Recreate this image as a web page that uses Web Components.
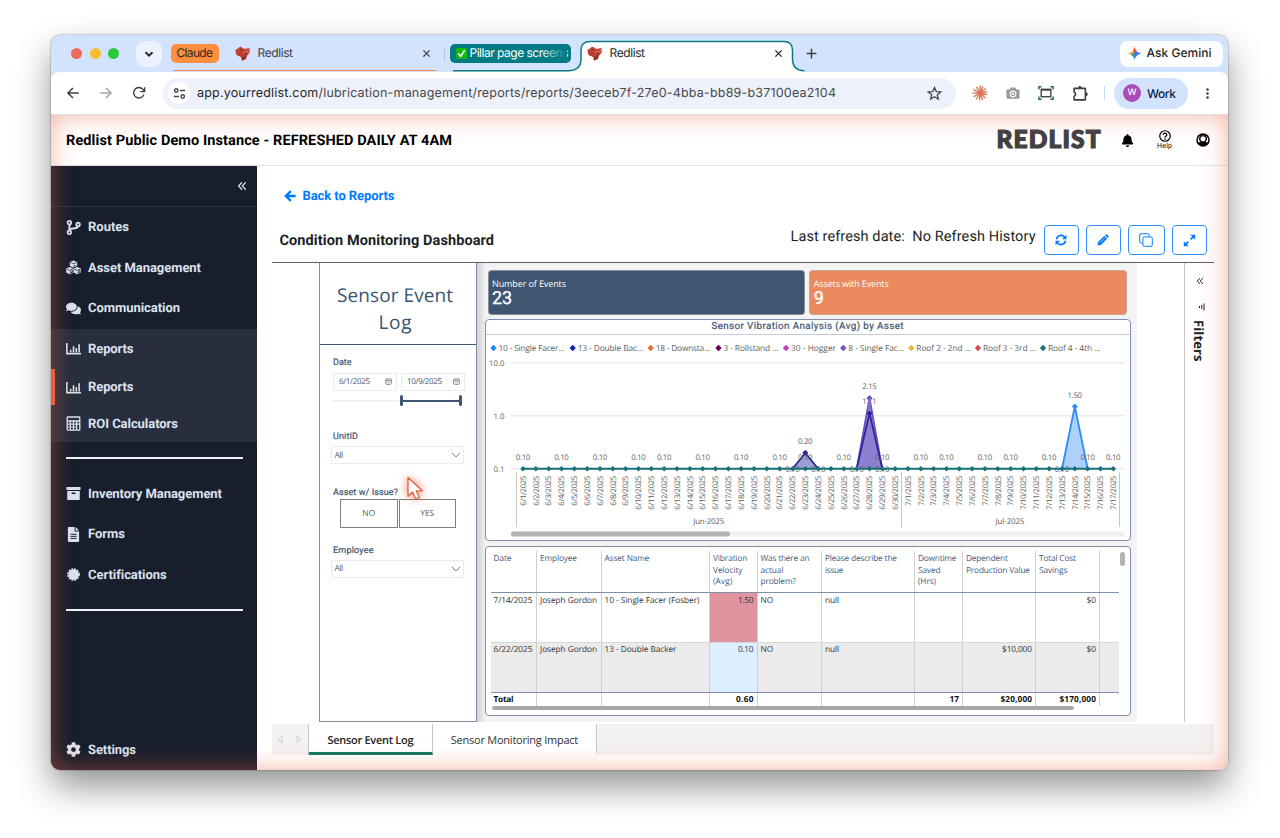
<!DOCTYPE html>
<html lang="en">
<head>
<meta charset="utf-8">
<title>Redlist</title>
<style>
  body {
    margin: 0;
    width: 1280px;
    height: 838px;
    overflow: hidden;
    background: #fff;
    font-family: Roboto, sans-serif;
    text-rendering: geometricPrecision;
    --font-ui: Inter, sans-serif;
    --font-report: "Open Sans", "Noto Sans", sans-serif;
    --navy: #3f5571;
    --blue: #007bff;
    --teal: #007b83;
  }
</style>
</head>
<body>
<browser-window>
  <tab-strip slot="tabs"></tab-strip>
  <address-bar slot="toolbar"></address-bar>
  <app-header></app-header>
  <app-layout>
    <side-nav slot="nav">
      <nav-item icon="branch">Routes</nav-item>
      <nav-item icon="cubes">Asset Management</nav-item>
      <nav-item icon="comments">Communication</nav-item>
      <nav-item slot="group" icon="chart">Reports</nav-item>
      <nav-item slot="group" icon="chart" active>Reports</nav-item>
      <nav-item slot="group" icon="calculator" class="last">ROI Calculators</nav-item>
      <nav-item slot="tools" icon="archive">Inventory Management</nav-item>
      <nav-item slot="tools" icon="file">Forms</nav-item>
      <nav-item slot="tools" icon="certificate">Certifications</nav-item>
      <nav-item slot="bottom" icon="cog">Settings</nav-item>
    </side-nav>
    <report-page>
      <slicer-panel slot="slicers"></slicer-panel>
      <kpi-card slot="kpi" value="23" measure="20"><fit-text width="74">Number of Events</fit-text></kpi-card>
      <kpi-card slot="kpi" value="9" measure="9" style="--card: #eb895f"><fit-text width="75">Assets with Events</fit-text></kpi-card>
      <vibration-chart></vibration-chart>
      <event-table></event-table>
      <filter-pane slot="filters"></filter-pane>
      <sheet-tabs slot="sheets"></sheet-tabs>
    </report-page>
  </app-layout>
</browser-window>

<script>
const ICONS = {
  down: ["0 0 16 16", `<path d="M4 6l4 4 4-4" fill="none" stroke="currentColor" stroke-width="2.1"/>`],
  close: ["0 0 16 16", `<path d="M2.5 2.5l11 11M13.5 2.5l-11 11" stroke="currentColor" stroke-width="2.3"/>`],
  plus: ["0 0 16 16", `<path d="M8 2v12M2 8h12" stroke="currentColor" stroke-width="1.8"/>`],
  back: ["0 0 16 16", `<path d="M14.5 8H2.5M8 2.2L2.2 8 8 13.8" fill="none" stroke="currentColor" stroke-width="1.7"/>`],
  forward: ["0 0 16 16", `<path d="M1.5 8h12M8 2.2L13.8 8 8 13.8" fill="none" stroke="currentColor" stroke-width="1.7"/>`],
  reload: ["0 0 16 16", `<path d="M13.6 9.6A6 6 0 1 1 12.4 3.8L14 5.6" fill="none" stroke="currentColor" stroke-width="1.6"/><path d="M14.5 1.4v5H9.5" fill="none" stroke="currentColor" stroke-width="1.5"/>`],
  tune: ["0 0 16 16", `<g fill="none" stroke="currentColor" stroke-width="1.7"><circle cx="4" cy="4.3" r="2.1"/><path d="M8.5 4.3H15M1 11.7h6.5"/><circle cx="12" cy="11.7" r="2.1"/></g>`],
  star: ["0 0 16 16", `<path d="M8 1.6l1.9 4.3 4.7.4-3.6 3.1 1.1 4.6L8 11.5 3.900 14 5 9.400 1.400 6.300l4.700-.400z" fill="none" stroke="currentColor" stroke-width="1.400"/>`],
  burst: ["0 0 16 16", `<path d="M8 8L8.2.6M8 8l3-6.6M8 8l5.6-4.6M8 8l7.3-1.4M8 8l7.2 1.6M8 8l5.4 5M8 8l2.6 6.9M8 8l-.4 7.4M8 8l-3.7 6.3M8 8l-6.4 3.8M8 8l-7.4.2M8 8L1.500 4.600M8 8L4.400 1.800" stroke="#d97757" stroke-width="1.350"/>`],
  camera: ["0 0 16 16", `<path fill="#9a9a9a" d="M1.500 4H4l1.400-2.400h5.200L12 4h2.500q1 0 1 1v8.500q0 1-1 1h-13q-1 0-1-1V5q0-1 1-1z"/><circle cx="8" cy="9" r="3.200" fill="none" stroke="#fff" stroke-width="1.300"/><circle cx="8" cy="9" r="1.300" fill="#fff"/>`],
  capture: ["0 0 18 16", `<g fill="none"><path d="M1 4V1h3M14 1h3v3M17 12v3h-3M4 15H1v-3" stroke="#1c6b56" stroke-width="1.600"/><rect x="3.600" y="3.800" width="10.800" height="8.400" stroke="#3c4043" stroke-width="1.500"/><path d="M3.600 4.600h10.800" stroke="#3c4043" stroke-width="1.600"/></g>`],
  puzzle: ["0 0 16 16", `<path d="M2 3.200h10.600v10.800H2v-3.500a2 2 0 0 0 0-3.800z" fill="none" stroke="currentColor" stroke-width="1.500" stroke-linejoin="round"/><path d="M5.600 2.800a1.800 1.800 0 0 1 3.600 0zM13 6.900a1.800 1.800 0 0 1 0 3.600z" fill="currentColor"/>`],
  dots: ["0 0 16 16", `<g fill="currentColor"><circle cx="8" cy="3" r="1.600"/><circle cx="8" cy="8" r="1.600"/><circle cx="8" cy="13" r="1.600"/></g>`],
  redlist: ["0 0 16 16", `<path d="M.3 4.600L5.800.7l4 2.400 5.400-1.100.5 5-3 3.600-.9 3.300-4.400 1.900-.4-3.700L1.600 9.500z" fill="#b83e2f"/><path d="M.3 4.600L5.800.7l4 2.400-4.500 3.200z" fill="#cc4a38"/><path d="M7.300 6.500l8.200-3.800-.4 4.200-4.800 3.200z" fill="#da5a46"/><path d="M4.200 4.200l2-1.400 1 .6-1.800 1.500z" fill="#5e1c14"/><path d="M9.700 8.300l2.800-1.600v1.500l-2 1.300z" fill="#6a2117"/><path d="M7 12.300l4.800-2.300-.9 3.600L7.400 15.500z" fill="#8f2c20"/>`],
  check: ["0 0 12 12", `<rect width="12" height="12" rx="1.500" fill="#10ba10"/><path d="M2.500 6l2.600 3L9.500 2.500" fill="none" stroke="#fff" stroke-width="1.700"/>`],
  gemini: ["0 0 16 16", `<path d="M8 0Q8.500 7.500 8 8Q2 8.300 0 8Q6 7 8 0z" fill="#f3a63a"/><path d="M8 0Q9.500 6.500 16 8L8 8.500z" fill="#ec4b3c"/><path d="M16 8Q9.800 9.300 8 16L7 8 11 6z" fill="#2f7cf6"/><path d="M8 16Q6.500 9.500 0 8l7-1z" fill="#33a853"/><path d="M8 4l4 4-4 5-2-5z" fill="#2f7cf6"/><path d="M8 0Q6.500 6.500 0 8l6 .6L8.200 5z" fill="#f0b429"/><path d="M8 0l-1 4 .8 2.500L10.500 6Q8.700 3.500 8 0z" fill="#ea4335"/>`],
  bell: ["0 0 448 512", `<path fill="currentColor" d="M224 512c35.320 0 63.970-28.650 63.970-64H160.030c0 35.350 28.650 64 63.970 64zm215.390-149.710c-19.320-20.760-55.470-51.990-55.470-154.290 0-77.700-54.480-139.900-127.940-155.160V32c0-17.670-14.320-32-31.980-32s-31.980 14.330-31.980 32v20.840C118.560 68.100 64.080 130.300 64.080 208c0 102.300-36.150 133.530-55.470 154.290-6 6.450-8.660 14.160-8.610 21.710.11 16.400 12.980 32 32.100 32h383.800c19.120 0 32-15.600 32.100-32 .05-7.550-2.610-15.270-8.610-21.710z"/>`],
  help: ["0 0 16 16", `<circle cx="8" cy="8" r="7" fill="none" stroke="currentColor" stroke-width="1.600"/><path d="M5.600 6.300a2.400 2.200 0 1 1 3.600 1.900Q8 8.800 8 10" fill="none" stroke="currentColor" stroke-width="1.700"/><circle cx="8" cy="12.100" r="1.100" fill="currentColor"/>`],
  user: ["0 0 16 16", `<circle cx="8" cy="8" r="7.700" fill="currentColor"/><path d="M1.900 8.300A6.100 6.100 0 0 1 14.100 8.300L12.900 11.200Q11.800 10.200 10.800 10A4 4 0 0 0 8 2.700 4 4 0 0 0 5.200 10Q4.200 10.200 3.100 11.200z" fill="#fff"/><circle cx="8" cy="6.500" r="2.900" fill="#fff"/>`],
  collapse: ["0 0 16 16", `<path d="M8 2L2.500 8 8 14M14 2L8.500 8l5.500 6" fill="none" stroke="currentColor" stroke-width="1.900"/>`],
  branch: ["0 0 16 16", `<g fill="none" stroke="currentColor" stroke-width="1.900"><circle cx="3.600" cy="2.900" r="1.900"/><circle cx="3.600" cy="13.200" r="1.900"/><circle cx="12.900" cy="4.700" r="1.900"/><path d="M3.600 5v6M3.800 10.300Q4.500 9 7.500 9 12 9 12.800 6.800" stroke-width="2.100"/></g>`],
  cubes: ["0 0 16 16", `<g fill="currentColor"><path d="M8 .6l3.900 1.500v4.300L8 8.100 4.100 6.400V2.100z"/><path d="M4 7.500l3.800 1.600v4.300L4 15.200.2 13.400V9.100z"/><path d="M12 7.500l3.800 1.600v4.300L12 15.200l-3.800-1.800V9.100z"/></g><g fill="none" stroke="#181e2c" stroke-width=".8"><path d="M4.800 2.600L8 4l3.200-1.400M8.800 5.400v1.500l2-1M.9 9.700L4 11l3.100-1.300M4.800 12.300v1.700l2-1V11zM8.900 9.700L12 11l3.100-1.300M12.800 12.300v1.700l2-1V11z"/></g>`],
  comments: ["0 0 576 512", `<path fill="currentColor" d="M416 192c0-88.400-93.100-160-208-160S0 103.600 0 192c0 34.300 14.100 65.900 38 92-13.400 30.200-35.500 54.200-35.800 54.500-2.200 2.300-2.800 5.700-1.500 8.700S4.800 352 8 352c36.600 0 66.900-12.300 88.700-25 32.200 15.700 70.300 25 111.300 25 114.900 0 208-71.600 208-160zm122 220c23.900-26 38-57.700 38-92 0-66.900-53.500-124.200-129.300-148.100.9 6.600 1.300 13.300 1.300 20.100 0 105.900-107.700 192-240 192-10.800 0-21.300-.8-31.700-1.900C207.800 439.600 281.800 480 368 480c41 0 79.100-9.200 111.300-25 21.800 12.700 52.100 25 88.700 25 3.200 0 6.100-1.900 7.300-4.800 1.300-2.900.7-6.300-1.500-8.700-.3-.3-22.400-24.200-35.800-54.500z"/>`],
  chart: ["0 0 16 16", `<path d="M.9 2v11.500H16M5 12V9.300M8 12V5.500M11 12V7.500M14 12V3.500" fill="none" stroke="currentColor" stroke-width="1.700"/>`],
  calculator: ["0 0 16 16", `<path d="M2 .3h12q1.400 0 1.400 1.400v12.600q0 1.400-1.400 1.400H2q-1.400 0-1.400-1.400V1.700Q.6.300 2 .3z" fill="currentColor"/><path fill="#282e3d" d="M2 1.800h12v2.700H2zM2 6h2v2H2zm3.300 0h2v2h-2zm3.300 0h2v2h-2zM12 6h2v2h-2zM2 9.200h2v2H2zm3.300 0h2v2h-2zm3.300 0h2v2h-2zM2 12.300h2v2H2zm3.300 0h2v2h-2zm3.300 0h2v2h-2zM12 9.200h2v5.100h-2z"/>`],
  archive: ["0 0 16 16", `<path fill="currentColor" d="M.5 1h15v3.300H.5zM1.300 5.300h13.400V14q0 1-1 1H2.300q-1 0-1-1z"/><rect x="5.800" y="7" width="4.400" height="1.500" rx=".7" fill="#181e2c"/>`],
  file: ["0 0 16 16", `<path fill="currentColor" d="M2.800 0h6.400v4.800H14V15q0 1-1 1H3q-1 0-1-1V1q0-1 .8-1zM10.200 0L14 3.800h-3.800z"/><path d="M4.800 7.800h6.400M4.800 10h6.400M4.800 12.200h6.400" stroke="#181e2c" stroke-width="1"/>`],
  certificate: ["0 0 16 16", `<circle cx="8" cy="8" r="5.500" fill="currentColor"/><circle cx="8" cy="8" r="5.800" fill="none" stroke="currentColor" stroke-width="2" stroke-dasharray="2 1.037"/>`],
  cog: ["0 0 512 512", `<path fill="currentColor" d="M487.400 315.700l-42.600-24.600c4.300-23.200 4.300-47 0-70.200l42.600-24.600c4.900-2.800 7.100-8.600 5.500-14-11.100-35.600-30-67.800-54.700-94.600-3.800-4.100-10-5.100-14.800-2.300L380.800 110c-17.900-15.400-38.500-27.300-60.800-35.100V25.800c0-5.600-3.900-10.500-9.400-11.700-36.700-8.200-74.300-7.800-109.200 0-5.500 1.200-9.400 6.100-9.400 11.700V75c-22.200 7.900-42.800 19.800-60.800 35.100L88.700 85.500c-4.900-2.800-11-1.900-14.800 2.300-24.700 26.700-43.600 58.900-54.700 94.600-1.700 5.400.6 11.200 5.500 14L67.300 221c-4.300 23.200-4.300 47 0 70.200l-42.600 24.600c-4.900 2.800-7.100 8.600-5.500 14 11.100 35.600 30 67.800 54.700 94.600 3.800 4.100 10 5.100 14.800 2.300l42.600-24.600c17.900 15.400 38.500 27.300 60.800 35.100v49.200c0 5.600 3.900 10.500 9.400 11.700 36.700 8.200 74.300 7.800 109.200 0 5.500-1.200 9.400-6.100 9.400-11.700v-49.200c22.200-7.900 42.800-19.800 60.800-35.100l42.600 24.600c4.900 2.800 11 1.900 14.800-2.300 24.700-26.700 43.600-58.900 54.700-94.600 1.500-5.500-.7-11.300-5.600-14.100zM256 336c-44.100 0-80-35.900-80-80s35.900-80 80-80 80 35.900 80 80-35.900 80-80 80z"/>`],
  arrow: ["0 0 16 16", `<path d="M15.500 8H3M9 1.500L2.500 8 9 14.500" fill="none" stroke="currentColor" stroke-width="3.200"/>`],
  sync: ["0 0 16 16", `<g fill="none" stroke="currentColor" stroke-width="2.200"><path d="M2 7A6.100 6.100 0 0 1 13 4.500M14 9A6.100 6.100 0 0 1 3 11.500"/></g><path fill="currentColor" d="M15.300 1v6H9.300zM.7 15V9h6z"/>`],
  pencil: ["0 0 16 16", `<path fill="currentColor" d="M1.300 10.800L9.600 2.500l3.900 3.900-8.300 8.300-4.500.6zM10.500 1.700l1.200-1q1-.7 2 .2l1.500 1.500q.8.900 0 1.900l-1.100 1.100z"/><path d="M4 11.500l6-6" stroke="#fff" stroke-width=".8"/>`],
  copy: ["0 0 16 16", `<g fill="none" stroke="currentColor" stroke-width="1.100"><rect x="4.500" y="4.500" width="10.700" height="10.700" rx="1.500"/><path d="M4.300 11.500H2.300q-1.500 0-1.500-1.500V2.300Q.8.800 2.300.8H10q1.500 0 1.500 1.500v2"/></g>`],
  expand: ["0 0 16 16", `<path d="M9.500 6.500L13 3M6.500 9.500L3 13" stroke="currentColor" stroke-width="2.200"/><path fill="currentColor" d="M9 1h6v6zM1 9v6h6z"/>`],
  chevron: ["0 0 16 16", `<path d="M1.500 4.500L8 11l6.500-6.500" fill="none" stroke="currentColor" stroke-width="1.300"/>`],
  calendar: ["0 0 16 16", `<rect x="1.500" y="2" width="13" height="12.500" rx="2.500" fill="none" stroke="currentColor" stroke-width="1.500"/><path d="M1.500 5.500h13M4.500 9.500h7" stroke="currentColor" stroke-width="1.300"/>`],
  bars: ["0 0 16 16", `<path d="M14 1v14M9.500 4v8M5 6v4M1.500 7.500v1" stroke="currentColor" stroke-width="2"/>`],
};

const define = (name, html, extra) => {
  customElements.define(name, class extends HTMLElement {
    constructor() {
      super();
      this.attachShadow({ mode: "open" });
    }

    connectedCallback() {
      this.shadowRoot.innerHTML = typeof html === "function" ? html(this) : html;
      if (extra) extra(this);
    }
  });
};

const fit = (width, text) => `<fit-text width="${width}">${text}</fit-text>`;

define("ui-icon", (el) => {
  const [box, body] = ICONS[el.getAttribute("name")];
  const size = el.getAttribute("size") || 16;
  return `
    <style>
      :host { display: inline-flex; flex: none; }
      svg { display: block; }
    </style>
    <svg width="${size}" height="${size}" viewBox="${box}">${body}</svg>`;
});

define("browser-window", `
  <style>
    :host {
      display: flex;
      flex-direction: column;
      box-sizing: border-box;
      width: 1177px;
      height: 735px;
      margin: 35px 0 0 51px;
      border-radius: 10px;
      background: #d3e3fd;
      box-shadow: 0 0 1px 1px rgba(0, 0, 0, .16), 0 17px 35px rgba(0, 0, 0, .42);
    }
    .page {
      display: flex;
      flex-direction: column;
      flex: 1;
      position: relative;
      overflow: hidden;
      background: #fff;
      border-radius: 0 0 9px 9px;
    }
    /* glow over the edges of the page */
    .page::after {
      content: "";
      position: absolute;
      inset: 0;
      border-radius: 0 0 9px 9px;
      box-shadow: inset 0 0 24px rgba(232, 100, 65, .5);
      pointer-events: none;
    }
  </style>
  <slot name="tabs"></slot>
  <slot name="toolbar"></slot>
  <div class="page"><slot></slot></div>
`);

define("tab-strip", `
  <style>
    :host {
      display: flex;
      align-items: center;
      height: 37px;
      padding: 0 5px 0 20px;
      font: 12px var(--font-ui);
      color: #3c4043;
    }
    fit-text { margin-top: -2px; }
    .light { width: 11px; height: 11px; margin-right: 7.500px; border-radius: 50%; }
    .menu {
      display: flex;
      align-items: center;
      justify-content: center;
      width: 26px;
      height: 26px;
      margin: 0 9px 0 9.500px;
      border-radius: 9px;
      background: #ebf1fe;
      color: #202124;
    }
    .group { position: relative; display: flex; align-items: center; height: 37px; flex: none; }
    .claude { width: 265px; }
    .claude::after {
      content: "";
      position: absolute;
      left: 2px;
      right: 0;
      bottom: 1px;
      height: 1.500px;
      background: #f08a45;
    }
    .chip {
      display: flex;
      align-items: center;
      box-sizing: border-box;
      height: 19px;
      padding-left: 5.500px;
      border-radius: 5px;
      background: #ff8e3f;
      color: #33251a;
      position: relative;
      overflow: hidden;
      flex: none;
    }
    .claude .chip { width: 48px; margin-right: 16px; }
    .pillar { width: 355px; }
    .pillar .chip { width: 121px; background: var(--teal); color: #fff; }
    .pillar .chip::after {
      content: "";
      position: absolute;
      right: 4px;
      width: 26px;
      height: 18px;
      background: linear-gradient(90deg, transparent, var(--teal));
    }
    .pillar .chip ui-icon { margin-right: 3px; }
    .frame { position: absolute; left: 0; top: 0; }
    .pillar > :not(.frame) { position: relative; }
    .name { display: flex; margin-left: 7.500px; }
    .sep { width: 1px; height: 14px; margin: 0 5px 0 8px; background: #a8c7fa; }
    .gemini {
      display: flex;
      align-items: center;
      box-sizing: border-box;
      width: 103px;
      height: 26px;
      margin-left: auto;
      padding-left: 8px;
      gap: 5.500px;
      border-radius: 8px;
      background: #fff;
      color: #1f1f1f;
      font-weight: 500;
    }
  </style>
  <span class="light" style="background: #ec6a5e"></span>
  <span class="light" style="background: #f5bd2f"></span>
  <span class="light" style="background: #2bc840"></span>
  <span class="menu"><ui-icon name="down" size="14"></ui-icon></span>
  <div class="group claude">
    <span class="chip">${fit(36.5, "Claude")}</span>
    <ui-icon name="redlist" size="15"></ui-icon>
    <span class="name">${fit(35.5, "Redlist")}</span>
    <ui-icon name="close" size="9" style="margin: 0 5px 0 auto"></ui-icon>
  </div>
  <span class="sep"></span>
  <div class="group pillar">
    <svg class="frame" width="356" height="37" viewBox="0 0 356 37">
      <path d="M3 36h118q10-1 10.500-11V15q0-9 9-9H334q9 0 9 9v10q.5 10 11 11v1H3z" fill="#fff"/>
      <path d="M3 36.500v-1h118v1z" fill="#d3e3fd"/>
      <path d="M3 35.700h115q12.500 0 13-11V15.500q0-9 9-9H334q8.500 0 8.500 9v9.200q.5 11 12 11" fill="none" stroke="#0f7b80" stroke-width="1.500"/>
    </svg>
    <span class="chip"><ui-icon name="check" size="11"></ui-icon>${fit(99, "Pillar page screens")}</span>
    <ui-icon name="redlist" size="15" style="margin-left: 16px"></ui-icon>
    <span class="name" style="color: #1f1f1f">${fit(35.5, "Redlist")}</span>
    <ui-icon name="close" size="9" style="margin: 0 22px 0 auto; color: #1f1f1f"></ui-icon>
  </div>
  <ui-icon name="plus" size="13"></ui-icon>
  <span class="gemini"><ui-icon name="gemini" size="13"></ui-icon>${fit(65, "Ask Gemini")}</span>
`);

define("address-bar", `
  <style>
    :host {
      display: flex;
      align-items: center;
      box-sizing: border-box;
      height: 43px;
      padding: 0 14px 0 15px;
      border-bottom: 1px solid #dfe1e6;
      border-radius: 8px 8px 0 0;
      background: #fff;
      color: #3c4043;
      font: 12.500px var(--font-ui);
    }
    .url {
      display: flex;
      align-items: center;
      box-sizing: border-box;
      width: 793px;
      height: 31px;
      margin-left: 17px;
      padding: 0 14px 0 5px;
      border-radius: 16px;
      background: #ecf1fb;
      color: #474747;
    }
    .url b { font-weight: 400; color: #1f1f1f; }
    .tune {
      display: flex;
      align-items: center;
      justify-content: center;
      width: 22px;
      height: 22px;
      margin-right: 7px;
      border-radius: 50%;
      background: #fff;
    }
    .sep { width: 1px; height: 14px; margin: 0 9px 0 15px; background: #c4dafc; }
    .profile {
      display: flex;
      align-items: center;
      box-sizing: border-box;
      width: 74px;
      height: 31px;
      padding-left: 9px;
      gap: 6px;
      border-radius: 16px;
      background: #d3e3fd;
      color: #041e49;
      font-weight: 500;
      font-size: 12px;
    }
    .avatar {
      width: 18px;
      height: 18px;
      border-radius: 50%;
      background: #a94bb8;
      color: #fff;
      font-size: 9px;
      line-height: 18px;
      text-align: center;
    }
  </style>
  <ui-icon name="back" size="14"></ui-icon>
  <ui-icon name="forward" size="14" style="margin-left: 19px; color: #a0a2a5"></ui-icon>
  <ui-icon name="reload" size="14" style="margin-left: 19px"></ui-icon>
  <div class="url">
    <span class="tune"><ui-icon name="tune" size="13"></ui-icon></span>
    ${fit(639, "<b>app.yourredlist.com</b>/lubrication-management/reports/reports/3eeceb7f-27e0-4bba-bb89-b37100ea2104")}
    <ui-icon name="star" size="15" style="margin-left: auto"></ui-icon>
  </div>
  <ui-icon name="burst" size="16" style="margin-left: 16px"></ui-icon>
  <ui-icon name="camera" size="14" style="margin-left: 18px"></ui-icon>
  <ui-icon name="capture" size="16" style="margin-left: 18px"></ui-icon>
  <ui-icon name="puzzle" size="17" style="margin-left: 18px"></ui-icon>
  <span class="sep"></span>
  <span class="profile"><span class="avatar">W</span>${fit(29, "Work")}</span>
  <ui-icon name="dots" size="13" style="margin-left: auto"></ui-icon>
`);

define("app-header", `
  <style>
    :host {
      display: flex;
      align-items: center;
      box-sizing: border-box;
      height: 51px;
      padding: 0 18.500px 0 15px;
      border-bottom: 1px solid #dee4ea;
      color: #000;
    }
    h1 { margin: 1px 0 0; font-size: 14.500px; font-weight: 700; line-height: 20px; }
    .logo {
      margin: 0 0 0 auto;
      color: #414042;
      font: 900 24.500px/30px Lato, sans-serif;
      -webkit-text-stroke: 1.200px #414042;
    }
    .help {
      display: flex;
      flex-direction: column;
      align-items: center;
      width: 20px;
      margin: 0 21px 0 21px;
      font-size: 7px;
      line-height: 8px;
    }
  </style>
  <h1>${fit(386, "Redlist Public Demo Instance - REFRESHED DAILY AT 4AM")}</h1>
  <span class="logo">${fit(104, "REDLIST")}</span>
  <ui-icon name="bell" size="13" style="margin-left: 20px"></ui-icon>
  <span class="help"><ui-icon name="help" size="12"></ui-icon>${fit(15, "Help")}</span>
  <ui-icon name="user" size="14"></ui-icon>
`);

define("app-layout", `
  <style>
    :host { display: flex; flex: 1; min-height: 0; }
  </style>
  <slot name="nav"></slot>
  <slot></slot>
`);

define("side-nav", `
  <style>
    :host {
      display: flex;
      flex-direction: column;
      width: 206px;
      background: #181e2c;
      color: #dbe2ee;
    }
    .top {
      display: flex;
      align-items: center;
      justify-content: flex-end;
      box-sizing: border-box;
      height: 41px;
      padding-right: 10px;
      border-bottom: 1px solid #2b3242;
    }
    .group { background: #282e3d; }
    hr { width: 177px; height: 2px; margin: 15px 14px 14.500px 15px; border: 0; background: #eef1f6; flex: none; }
    .bottom { margin-top: auto; }
  </style>
  <div class="top"><ui-icon name="collapse" size="10"></ui-icon></div>
  <slot></slot>
  <div class="group"><slot name="group"></slot></div>
  <hr>
  <slot name="tools"></slot>
  <hr style="margin-top: 14px">
  <div class="bottom"><slot name="bottom"></slot></div>
`);

const NAV_WIDTHS = {
  "Routes": 41, "Asset Management": 113, "Communication": 92, "Reports": 45.5, "ROI Calculators": 90,
  "Inventory Management": 134, "Forms": 37, "Certifications": 78.5, "Settings": 48,
};

define("nav-item", (el) => `
  <style>
    :host {
      display: flex;
      align-items: center;
      box-sizing: border-box;
      height: 40.500px;
      padding-left: 15px;
      font-size: 13px;
      font-weight: 700;
    }
    :host([active]) { height: 36px; padding-left: 11px; border-left: 4px solid #e95f3c; }
    :host(.last) { height: 37px; }
    ui-icon { margin-right: 7px; }
    fit-text { margin-top: 1px; }
  </style>
  <ui-icon name="${el.getAttribute("icon")}" size="15"></ui-icon>
  ${fit(NAV_WIDTHS[el.textContent], el.textContent)}
`);

define("report-page", `
  <style>
    :host { display: flex; flex-direction: column; flex: 1; padding: 0 14px 0 15px; background: #fff; color: #1b1f24; }
    .back {
      display: flex;
      align-items: center;
      gap: 6.500px;
      height: 59px;
      padding-left: 12px;
      color: var(--blue);
      font-size: 13px;
      font-weight: 700;
    }
    .back fit-text { margin-top: 1px; }
    .head { display: flex; align-items: center; height: 30px; padding: 0 7.500px 7px 7.500px; }
    h2 { margin: 0; font-size: 14.500px; font-weight: 700; }
    .refresh { margin: -8px 8px 0 auto; font-size: 14.500px; white-space: pre; }
    .btn {
      display: flex;
      align-items: center;
      justify-content: center;
      box-sizing: border-box;
      width: 35px;
      height: 30px;
      border: 1px solid #3391ff;
      border-radius: 4px;
      color: var(--blue);
    }
    .btn + .btn { margin-left: 7px; }
    .report { display: flex; height: 460px; box-sizing: border-box; border-top: 1.500px solid #605e5c; padding-left: 47px; }
    .canvas {
      display: flex;
      flex-direction: column;
      box-sizing: border-box;
      width: 660px;
      padding: 7px 6.500px 0 7.500px;
      background: linear-gradient(90deg, #d2d2d2, #f3f3f3 9px);
    }
    .kpis { display: flex; gap: 4px; margin: 0 3.500px 4px 3px; }
    .gap { flex: 1; }
  </style>
  <div class="back"><ui-icon name="arrow" size="12"></ui-icon>${fit(92, "Back to Reports")}</div>
  <div class="head">
    <h2>${fit(214.5, "Condition Monitoring Dashboard")}</h2>
    <span class="refresh">${fit(245, "Last refresh date:&nbsp; No Refresh History")}</span>
    <span class="btn"><ui-icon name="sync" size="12"></ui-icon></span>
    <span class="btn"><ui-icon name="pencil" size="12"></ui-icon></span>
    <span class="btn" style="width: 37px"><ui-icon name="copy" size="14"></ui-icon></span>
    <span class="btn"><ui-icon name="expand" size="13"></ui-icon></span>
  </div>
  <div class="report">
    <slot name="slicers"></slot>
    <div class="canvas">
      <div class="kpis"><slot name="kpi"></slot></div>
      <slot></slot>
    </div>
    <div class="gap"></div>
    <slot name="filters"></slot>
  </div>
  <slot name="sheets"></slot>
`);

define("slicer-panel", `
  <style>
    :host {
      display: flex;
      flex-direction: column;
      box-sizing: border-box;
      position: relative;
      width: 158px;
      border: 1px solid #7f90aa;
      border-top: 0;
      background: #fff;
      font: 8.500px var(--font-report);
      color: #605e5c;
    }
    h3 {
      box-sizing: border-box;
      height: 81.500px;
      margin: 0;
      padding: 18.500px 6px 0 0;
      border-bottom: 1.500px solid var(--navy);
      color: #3b5373;
      font-size: 19px;
      font-weight: 400;
      line-height: 27.500px;
      text-align: center;
    }
    label {
      display: block;
      height: 12px;
      padding-left: 13px;
      color: var(--navy);
      font: 400 9px/12px Roboto, sans-serif;
      -webkit-text-stroke: .2px var(--navy);
    }
    .dates { display: flex; gap: 4px; margin: 3.500px 0 0 13px; }
    .date, .select {
      display: flex;
      align-items: center;
      justify-content: space-between;
      box-sizing: border-box;
      width: 64px;
      height: 18px;
      padding: 0 4px 0 5px;
      border: 1px solid #ebebeb;
    }
    .date { font-size: 8px; color: var(--navy); }
    .select { width: 133px; margin: 3px 0 0 11px; padding: 0 2.500px 0 2.500px; }
    .slider { display: flex; align-items: center; height: 12px; margin: 4px 0 0 13px; }
    .rest { width: 67px; height: 2px; background: #f0f0f0; }
    .range { width: 56px; height: 2px; background: var(--navy); }
    .handle { width: 3px; height: 11px; border-radius: 1.500px; background: var(--navy); }
    .choice { display: flex; gap: 1px; margin: 0 0 0 20px; }
    .choice span {
      display: flex;
      align-items: center;
      justify-content: center;
      box-sizing: border-box;
      width: 57.500px;
      height: 29px;
      border: 1px solid #808080;
    }
    /* mouse pointer over the panel */
    .cursor { position: absolute; left: 77px; top: 204px; filter: drop-shadow(0 0 5px rgba(235, 80, 45, .75)); }
  </style>
  <h3>${fit(116, "Sensor Event")}<br>${fit(33, "Log")}</h3>
  <label style="margin-top: 12.500px">${fit(18.5, "Date")}</label>
  <div class="dates">
    <span class="date">${fit(31, "6/1/2025")}<ui-icon name="calendar" size="7"></ui-icon></span>
    <span class="date">${fit(35, "10/9/2025")}<ui-icon name="calendar" size="7"></ui-icon></span>
  </div>
  <div class="slider"><span class="rest"></span><span class="handle"></span><span class="range"></span><span class="handle"></span></div>
  <label style="margin-top: 24.500px">${fit(25, "UnitID")}</label>
  <span class="select">${fit(10, "All")}<ui-icon name="chevron" size="10"></ui-icon></span>
  <label style="margin-top: 22.500px">${fit(65, "Asset w/ Issue?")}</label>
  <div class="choice"><span>${fit(13, "NO")}</span><span>${fit(14, "YES")}</span></div>
  <label style="margin-top: 17px">${fit(40.5, "Employee")}</label>
  <span class="select" style="margin-top: 3px">${fit(10, "All")}<ui-icon name="chevron" size="10"></ui-icon></span>
  <svg class="cursor" width="40" height="40" viewBox="0 0 40 40">
    <path d="M11 10.500v18.800l4.500-4.200 3.300 7 3.500-1.600-3.200-6.700h6.200z" fill="#fff" stroke="#e4603f" stroke-width="1.300" stroke-linejoin="round"/>
  </svg>
`);

define("kpi-card", (el) => `
  <style>
    :host {
      display: block;
      box-sizing: border-box;
      flex: 1;
      height: 45px;
      padding: 6.500px 3.500px;
      border: 1px solid rgba(180, 180, 180, .6);
      border-radius: 4px;
      background: var(--card, #3f5571);
      color: #fff;
      font: 9px/12px var(--font-report);
    }
    .value { font: 400 18px/17px Roboto, sans-serif; -webkit-text-stroke: .3px #fff; }
  </style>
  <slot></slot>
  <div class="value">${fit(el.getAttribute("measure"), el.getAttribute("value"))}</div>
`);

// Daily readings from 6/1 to 7/17 on a log scale
const STEP = 12.833;
const X0 = 523;
const dayX = (day) => X0 + day * STEP;
const valueY = (value) => 415.8 - 53 * Math.log10(value);
const DAYS = Array.from({ length: 47 }, (_, i) => (i < 30 ? `6/${i + 1}/2025` : `7/${i - 29}/2025`));
const LEGEND = [
  [493.5, 66, "10 - Single Facer...", "#118dff"],
  [572.7, 65.5, "13 - Double Bac...", "#12239e"],
  [650.7, 54.5, "18 - Downsta...", "#e66c37"],
  [718.5, 55, "3 - Rollstand ...", "#6b0050"],
  [786, 45, "30 - Hogger", "#c040b0"],
  [843.3, 56, "8 - Single Fac...", "#744ec2"],
  [911.3, 55, "Roof 2 - 2nd ...", "#f2b233"],
  [978, 53, "Roof 3 - 3rd ...", "#d64550"],
  [1043, 52.5, "Roof 4 - 4th ...", "#197278"],
];

const diamond = (x, y, color, r = 3) =>
  `<path d="M${x - r} ${y}l${r}-${r} ${r} ${r}-${r} ${r}z" fill="${color}"/>`;
const label = (x, y, text, width = 14.5) =>
  `<text x="${x}" y="${y + 2.8}" text-anchor="middle" textLength="${width}">${text}</text>`;
const peak = (day, value, color, fill) => {
  const y = valueY(value);
  return `<path d="M${dayX(day - 1)} 468.800L${dayX(day)} ${y} ${dayX(day + 1)} 468.800" fill="${fill}" stroke="${color}" stroke-width="1.800"/>`
    + diamond(dayX(day), y, color);
};

define("vibration-chart", () => {
  const legend = LEGEND.map(([x, w, name, color]) =>
    diamond(x, 348, color, 3.2) + `<text x="${x + 5}" y="351" textLength="${w}">${name}</text>`).join("");
  const grid = [10, 1, 0.1].map((v) =>
    `<path d="M510.500 ${valueY(v)}H1125" stroke="#ebebeb" stroke-width="1.600"/>
     <text x="504.500" y="${valueY(v) + 2.7}" text-anchor="end" class="small">${v.toFixed(1)}</text>`).join("");
  const readings = [0, 3, 6, 9, 11, 14, 17, 20, 22, 25, 28, 31, 33, 36, 38, 41, 44, 46]
    .map((d) => label(dayX(d), 456.7, "0.10")).join("");
  const onLine = [21, 23, 26, 28, 42].map((d) => label(dayX(d), 468.8, "0.10")).join("");
  const dates = DAYS.map((d, i) =>
    `<text transform="translate(${dayX(i) + 2.8} 475.700) rotate(-90)" text-anchor="end" textLength="${[30, 34][d.length - 8]}">${d}</text>`).join("");
  return `
    <style>
      :host {
        display: block;
        box-sizing: border-box;
        height: 222px;
        border: 1px solid #7f90aa;
        border-radius: 4px;
        background: #fff;
        overflow: hidden;
      }
      h4 {
        height: 14px;
        margin: 0;
        border-bottom: 1px solid #c8ccd2;
        color: var(--navy);
        font: 400 9.800px/14px Roboto, sans-serif;
        -webkit-text-stroke: .2px var(--navy);
        text-align: center;
      }
      svg { display: block; font: 8.300px var(--font-report); fill: #605e5c; }
      .small { font-size: 7.800px; }
    </style>
    <h4>${fit(192, "Sensor Vibration Analysis (Avg) by Asset")}</h4>
    <svg width="644" height="205" viewBox="486 335 644 205">
      ${legend}
      ${grid}
      <g class="small">
        ${peak(22, 0.2, "#28289b", "#9f9fd3")}
        ${peak(27, 2.15, "#744ec2", "#9a84d2")}
        ${peak(27, 1.11, "#28289b", "#8f7fd0")}
        ${peak(43, 1.5, "#2c8df8", "#add1fb")}
        ${readings}${onLine}
        ${label(dayX(22), 441, "0.20")}
        ${label(dayX(27), 386.5, "2.15")}
        ${label(dayX(27), 401.5, "1.11")}
        ${label(dayX(43), 394.8, "1.50")}
        ${diamond(dayX(27), valueY(2.15), "#744ec2")}
        <path d="M${dayX(27)} ${valueY(2.15)}V409" stroke="#8468ca" stroke-width="3"/>
        <path d="M${X0} 468.800H${dayX(46)}" stroke="#197278" stroke-width="1.900"/>
        ${DAYS.map((_, i) => diamond(dayX(i), 468.8, "#197278", 2.8)).join("")}
        ${dates}
        <path d="M516.500 472v55M901.500 472v55M1119.500 472v55" stroke="#c8c6c4"/>
        ${label(708.7, 520.8, "Jun-2025", 31)}
        ${label(1010, 520.8, "Jul-2025", 29)}
      </g>
      <rect x="511" y="531.500" width="614" height="5" rx="2.500" fill="#f0f0f0"/>
      <rect x="511" y="531.500" width="219" height="5" rx="2.500" fill="#b3b3b3"/>
    </svg>`;
});

const COLUMNS = [
  [[18, "Date"]],
  [[37, "Employee"]],
  [[45, "Asset Name"]],
  [[34.5, "Vibration"], [29.5, "Velocity"], [19.5, "(Avg)"]],
  [[49, "Was there an"], [23, "actual"], [35.5, "problem?"]],
  [[72, "Please describe the"], [18.5, "issue"]],
  [[38.5, "Downtime"], [22.5, "Saved"], [18, "(Hrs)"]],
  [[42, "Dependent"], [64, "Production Value"]],
  [[37, "Total Cost"], [28.5, "Savings"]],
  [],
];
const ROWS = [
  [[39, "7/14/2025"], [57, "Joseph Gordon"], [95, "10 - Single Facer (Fosber)"], [15.5, "1.50"], [12.5, "NO"], [14, "null"], 0, 0, [9.5, "$0"], 0],
  [[39, "6/22/2025"], [57, "Joseph Gordon"], [72, "13 - Double Backer"], [15.5, "0.10"], [12.5, "NO"], [14, "null"], 0, [30, "$10,000"], [9.5, "$0"], 0],
  [[20, "Total"], 0, 0, [17.5, "0.60"], 0, 0, [9.5, "17"], [31.5, "$20,000"], [36.5, "$170,000"], 0],
];

define("event-table", () => {
  const head = COLUMNS.map((lines) => `<div class="cell">${lines.map(([w, t]) => fit(w, t)).join("<br>")}</div>`).join("");
  const row = (cells) => cells.map((cell, i) =>
    `<div class="cell c${i}${[3, 6, 7, 8].includes(i) ? " num" : ""}">${cell ? fit(...cell) : ""}</div>`).join("");
  return `
    <style>
      :host {
        display: flex;
        box-sizing: border-box;
        height: 170px;
        margin-top: 5px;
        padding: 4px 5px 0 5px;
        border: 1px solid #7f90aa;
        border-radius: 4px;
        background: #fff;
        color: #333;
        font: 8.300px/11.500px var(--font-report);
      }
      .table { width: 629px; }
      .row {
        display: grid;
        box-sizing: border-box;
        grid-template-columns: 46.500px 64.500px 108.500px 47.500px 64.500px 93px 48px 73px 64px 1fr;
        height: 49px;
      }
      .cell { box-sizing: border-box; padding: 2px 3px 0; border-right: 1px solid #cfcfcf; white-space: nowrap; }
      .cell:last-child { border-right: 0; }
      .num { text-align: right; }
      .head { height: 42px; border-bottom: 1px solid #7f90aa; color: #3f5b82; }
      .head .cell { padding-top: 2.300px; }
      .r0 .c3 { background: #df939f; }
      .row.r1 { height: 50px; border-top: 1px solid #d8d8d8; background: #ebebeb; }
      .r1 .cell { padding-top: 1px; }
      .r1 .c3 { background: #dceeff; }
      .row.total { height: 13px; border-top: 1px solid #7f90aa; color: #111; font-weight: 700; }
      .total .cell { padding-top: 1px; }
      .hbar { width: 582px; height: 4.500px; margin: .5px 0 0 1px; border-radius: 2px; background: #a8a8a8; }
      .vbar { width: 5px; height: 14px; margin: 1px 0 0 1px; border-radius: 2.500px; background: #b3b3b3; flex: none; }
    </style>
    <div class="table">
      <div class="row head">${head}</div>
      <div class="row r0">${row(ROWS[0])}</div>
      <div class="row r1">${row(ROWS[1])}</div>
      <div class="row total">${row(ROWS[2])}</div>
      <div class="hbar"></div>
    </div>
    <div class="vbar"></div>`;
});

define("filter-pane", `
  <style>
    :host {
      display: flex;
      flex-direction: column;
      align-items: center;
      box-sizing: border-box;
      width: 30px;
      padding-top: 14px;
      border-left: 1px solid #c8c6c4;
      color: #252423;
      font: 700 13px/15px var(--font-report);
    }
    .title { writing-mode: vertical-rl; margin: 8.500px 3px 0 0; }
  </style>
  <ui-icon name="collapse" size="8"></ui-icon>
  <ui-icon name="bars" size="8" style="margin: 18px 0 0 2px"></ui-icon>
  <div class="title">${fit(41.5, "Filters")}</div>
`);

define("sheet-tabs", `
  <style>
    :host {
      display: flex;
      height: 31px;
      margin-top: 2px;
      background: #f3f2f1;
      color: #333;
      font: 11px var(--font-report);
    }
    .arrows {
      display: flex;
      align-items: center;
      justify-content: space-between;
      box-sizing: border-box;
      width: 37px;
      padding: 0 6px 0 5px;
      border-right: 1px solid #c8c6c4;
    }
    .tab {
      display: flex;
      align-items: center;
      justify-content: center;
      box-sizing: border-box;
      padding-top: 4.500px;
      border-right: 1px solid #c8c6c4;
      border-bottom: 3px solid transparent;
      background: #fff;
    }
    .active { width: 124px; border-bottom-color: #117865; color: #252423; font-weight: 600; }
    .other { width: 164px; }
  </style>
  <span class="arrows">
    <svg width="6" height="9" viewBox="0 0 6 9"><path d="M5 1v7L1 4.500z" fill="none" stroke="#cfcdcb"/></svg>
    <svg width="6" height="9" viewBox="0 0 6 9"><path d="M1 1v7l4-3.500z" fill="none" stroke="#cfcdcb"/></svg>
  </span>
  <span class="tab active">${fit(86, "Sensor Event Log")}</span>
  <span class="tab other">${fit(127.5, "Sensor Monitoring Impact")}</span>
`);

// Spreads its text over a set length. Defined last: it measures text that is already laid out.
define("fit-text", `
  <style>
    :host { display: inline-block; white-space: nowrap; flex: none; }
  </style>
  <slot></slot>
`, (el) => {
  const box = el.getBoundingClientRect();
  const length = Math.max(box.width, box.height > box.width ? box.height : 0);
  const count = el.textContent.length;
  // one or two characters keep their own spacing
  if (count < 3) return;
  const spacing = (Number(el.getAttribute("width")) - length) / (count - 1);
  el.style.letterSpacing = `${spacing.toFixed(3)}px`;
  el.style.marginInlineEnd = `${(-spacing).toFixed(3)}px`;
});
</script>
</body>
</html>
